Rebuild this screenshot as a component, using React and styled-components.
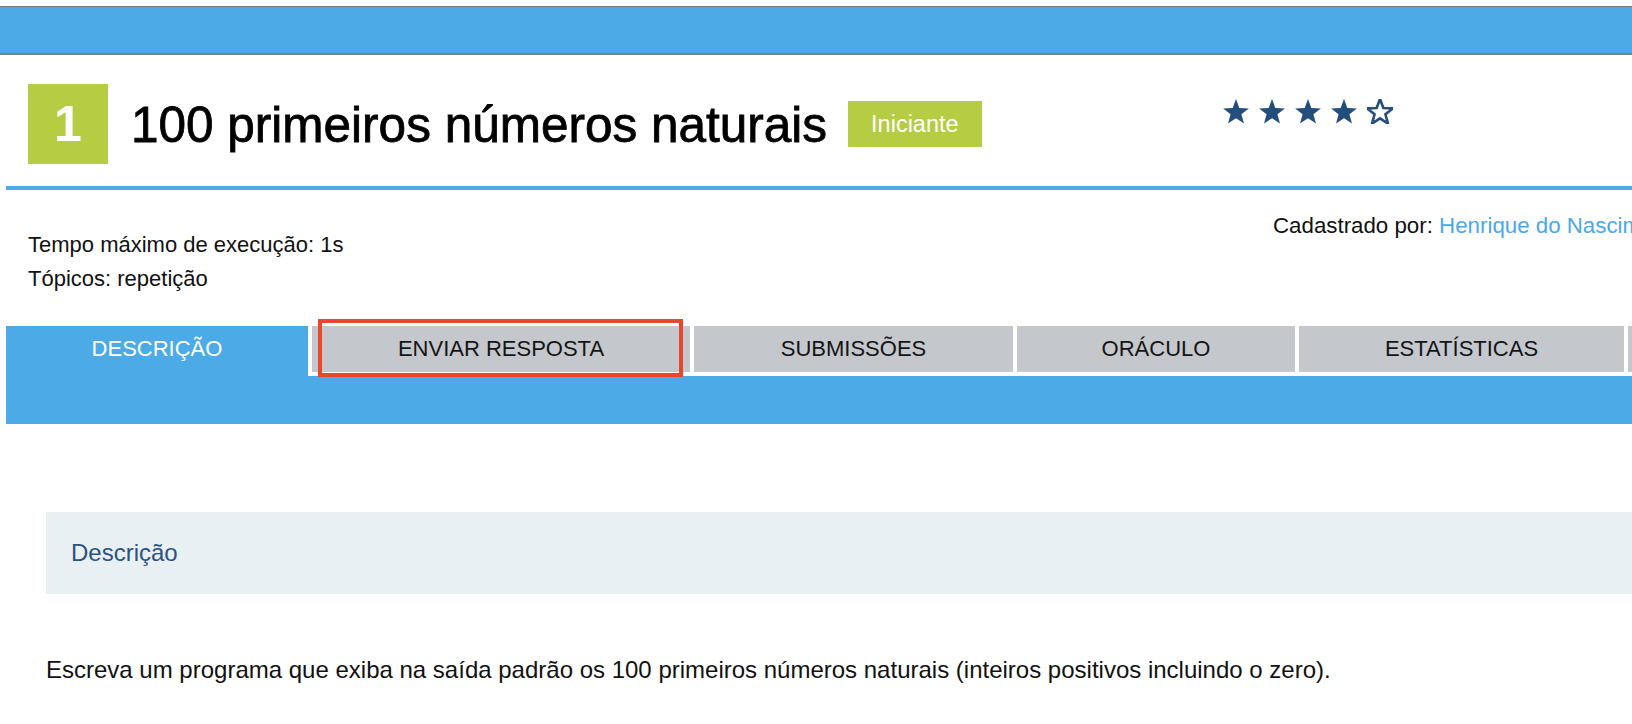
import React from 'react';
import styled, { createGlobalStyle } from 'styled-components';

const BLUE = '#4cabe7';
const GREEN = '#b6cd43';

const GlobalStyle = createGlobalStyle`
  html, body {
    margin: 0;
    padding: 0;
    overflow: hidden;
    background: #fff;
  }
  body {
    font-family: "Liberation Sans", Arial, sans-serif;
    color: #111;
  }
`;

const tabs = [
  { label: 'DESCRIÇÃO', width: 302, active: true },
  { label: 'ENVIAR RESPOSTA', width: 382, marked: true },
  { label: 'SUBMISSÕES', width: 323 },
  { label: 'ORÁCULO', width: 282 },
  { label: 'ESTATÍSTICAS', width: 329 },
  { label: '', width: 300 },
];

const Star = ({ filled }) => (
  <svg width='26' height='25' viewBox='2 2 20 19.4'>
    <polygon
      points='12,2 14.6,9 22,9.3 16.2,13.9 18.2,21.1 12,17 5.8,21.1 7.8,13.9 2,9.3 9.4,9'
      fill={filled ? '#234e7b' : '#fff'}
      stroke='#234e7b'
      strokeWidth={filled ? 0 : 2}
      strokeLinejoin='miter'
    />
  </svg>
);

export default function App() {
  return (
    <Page>
      <GlobalStyle />
      <TopBar />
      <Header>
        <TitleGroup>
          <NumberBox>1</NumberBox>
          <Title>100 primeiros números naturais</Title>
          <Badge>Iniciante</Badge>
        </TitleGroup>
        <Stars>
          {[1, 2, 3, 4, 5].map((n) => (
            <Star key={n} filled={n <= 4} />
          ))}
        </Stars>
      </Header>
      <Divider />
      <Meta>
        <MetaList>
          <MetaLine>Tempo máximo de execução: 1s</MetaLine>
          <MetaLine>Tópicos: repetição</MetaLine>
        </MetaList>
        <Author>
          Cadastrado por: <AuthorLink href='#'>Henrique do Nascimento Cunha</AuthorLink>
        </Author>
      </Meta>
      <TabBar>
        {tabs.map((t, i) => (
          <Tab key={i} $width={t.width} $active={t.active}>
            {t.label}
            {t.marked && <Highlight />}
          </Tab>
        ))}
      </TabBar>
      <Panel>
        <PanelTitle>Descrição</PanelTitle>
      </Panel>
      <Body>
        Escreva um programa que exiba na saída padrão os 100 primeiros números
        naturais (inteiros positivos incluindo o zero).
      </Body>
    </Page>
  );
}

const Page = styled.div`
  width: 1700px;
`;

const TopBar = styled.div`
  margin-top: 6px;
  height: 46px;
  background: ${BLUE};
  border-top: 1px solid #7b7b7b;
  border-bottom: 2px solid #808080;
`;

const Header = styled.div`
  display: flex;
  padding: 29px 0 22px 28px;
`;

const TitleGroup = styled.div`
  display: flex;
  align-items: center;
  width: 1195px;
`;

const NumberBox = styled.div`
  width: 80px;
  height: 80px;
  background: ${GREEN};
  color: #fff;
  font-size: 50px;
  font-weight: bold;
  display: flex;
  align-items: center;
  justify-content: center;
`;

const Title = styled.h1`
  margin: 0 0 0 23px;
  font-size: 49.5px;
  font-weight: normal;
  -webkit-text-stroke: 0.8px #000;
  color: #000;
  white-space: nowrap;
`;

const Badge = styled.span`
  margin-left: 21px;
  height: 46px;
  padding: 0 23px;
  background: ${GREEN};
  color: #fff;
  font-size: 23.5px;
  display: flex;
  align-items: center;
`;

const Stars = styled.div`
  display: flex;
  gap: 10px;
  margin-top: 15px;
  align-self: flex-start;
`;

const Divider = styled.div`
  margin-left: 6px;
  height: 4px;
  background: ${BLUE};
`;

const Meta = styled.div`
  display: grid;
  grid-template-columns: 1245px auto;
  padding-left: 28px;
  font-size: 22px;
  line-height: 34px;
`;

const MetaList = styled.div`
  padding-top: 38px;
`;

const MetaLine = styled.div``;

const Author = styled.div`
  padding-top: 19px;
  white-space: nowrap;
  font-size: 22.3px;
`;

const AuthorLink = styled.a`
  color: #4aa9e8;
  text-decoration: none;
`;

const TabBar = styled.div`
  margin: 30px 0 0 6px;
  height: 98px;
  background: ${BLUE};
  display: flex;
  align-items: flex-start;
`;

const Tab = styled.div`
  position: relative;
  box-sizing: border-box;
  flex: 0 0 ${(p) => p.$width}px;
  height: 50px;
  padding-bottom: ${(p) => (p.$active ? 4 : 0)}px;
  display: flex;
  align-items: center;
  justify-content: center;
  font-size: 22px;
  background: ${(p) => (p.$active ? BLUE : '#c4c7cc')};
  color: ${(p) => (p.$active ? '#fff' : '#151515')};
  border-left: ${(p) => (p.$active ? 'none' : '4px solid #fff')};
  border-bottom: ${(p) => (p.$active ? 'none' : '4px solid #fff')};
  white-space: nowrap;
`;

const Highlight = styled.span`
  position: absolute;
  top: -7px;
  left: 6px;
  width: 365px;
  height: 58px;
  box-sizing: border-box;
  border: 4px solid #e8462d;
`;

const Panel = styled.div`
  margin: 88px 0 0 46px;
  height: 82px;
  background: #e8f0f4;
  padding-left: 25px;
  display: flex;
  align-items: center;
`;

const PanelTitle = styled.h3`
  margin: 0;
  font-size: 24px;
  font-weight: normal;
  color: #2b5281;
`;

const Body = styled.p`
  margin: 62px 0 0 46px;
  font-size: 24px;
  line-height: 27px;
  color: #111;
`;
